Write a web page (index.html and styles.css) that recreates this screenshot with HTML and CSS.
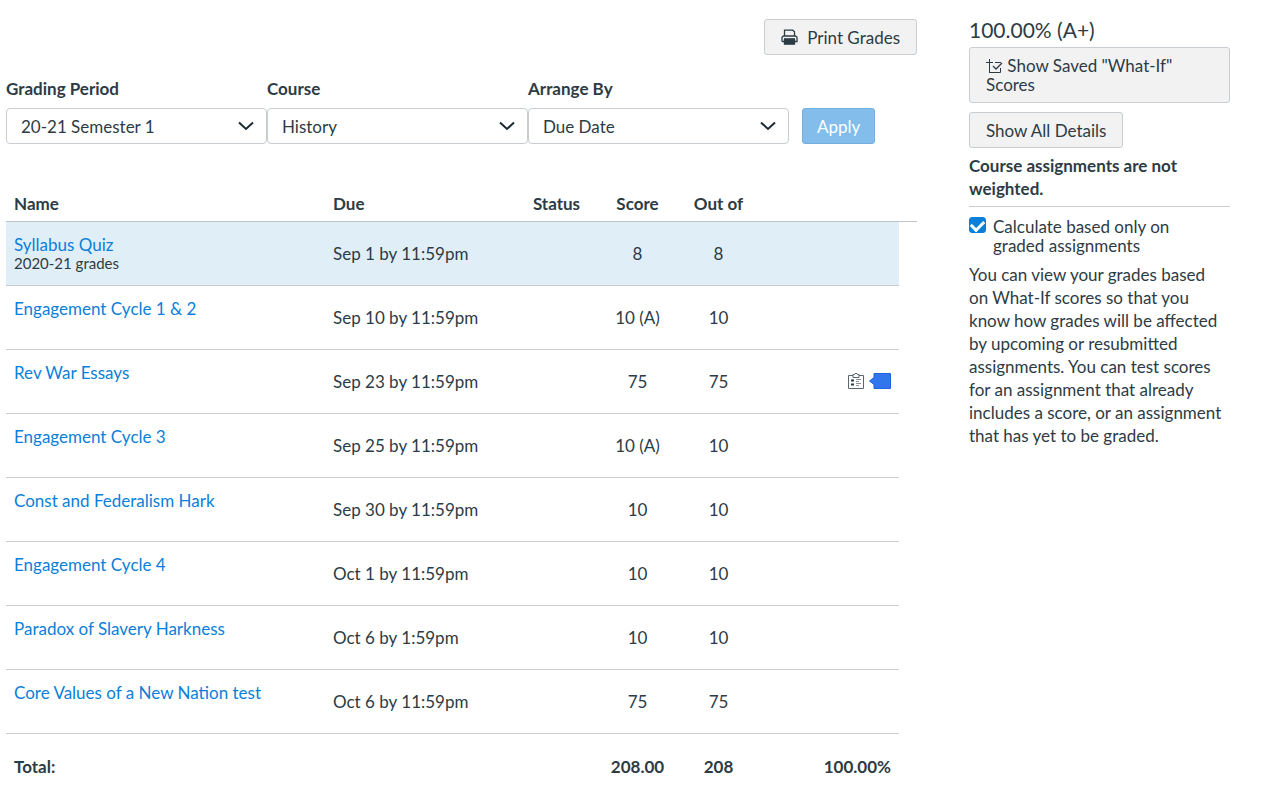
FILE: index.html
```html
<!DOCTYPE html>
<html lang="en">
<head>
    <meta charset="UTF-8">
    <meta name="viewport" content="width=device-width, initial-scale=1.0">
    <title>Grades</title>
    <link rel="stylesheet" href="styles.css">
</head>
<body>

<div class="page">
    <main>
        <div class="toolbar">
            <button type="button" class="btn btn-print">
                <svg width="17" height="16" viewBox="0 0 17 16" fill="none" stroke="#2d3b45" stroke-width="1.3">
                    <path d="M3.5 7V1.2h8.3l1.7 1.6V7M1 12.5V8.2L2.5 7h12L16 8.2v4.3h-2M1 12.5h2M3 9.8h11"/>
                    <path d="M3.5 10.5h10v4.7h-10z" fill="#2d3b45"/>
                </svg>
                Print Grades
            </button>
        </div>

        <form class="filters">
            <div class="form-group">
                <label for="period">Grading Period</label>
                <div class="select">
                    <select id="period" name="period">
                        <option>20-21 Semester 1</option>
                    </select>
                    <svg width="16" height="10" viewBox="0 0 16 10"><path d="M1 1.5l7 6.5 7-6.5"/></svg>
                </div>
            </div>
            <div class="form-group">
                <label for="course">Course</label>
                <div class="select">
                    <select id="course" name="course">
                        <option>History</option>
                    </select>
                    <svg width="16" height="10" viewBox="0 0 16 10"><path d="M1 1.5l7 6.5 7-6.5"/></svg>
                </div>
            </div>
            <div class="form-group">
                <label for="arrange">Arrange By</label>
                <div class="select">
                    <select id="arrange" name="arrange">
                        <option>Due Date</option>
                    </select>
                    <svg width="16" height="10" viewBox="0 0 16 10"><path d="M1 1.5l7 6.5 7-6.5"/></svg>
                </div>
            </div>
            <button type="button" class="btn btn-apply">Apply</button>
        </form>

        <table class="grades">
            <colgroup>
                <col>
                <col class="col-due">
                <col class="col-num">
                <col class="col-num">
                <col class="col-num">
                <col class="col-details">
                <col class="col-end">
            </colgroup>
            <thead>
                <tr>
                    <th class="name">Name</th>
                    <th class="due">Due</th>
                    <th>Status</th>
                    <th>Score</th>
                    <th>Out of</th>
                    <th></th>
                    <th></th>
                </tr>
            </thead>
            <tbody>
                <tr class="active">
                    <td class="name"><a href="#">Syllabus Quiz</a><div class="group">2020-21 grades</div></td>
                    <td class="due">Sep 1 by 11:59pm</td>
                    <td></td>
                    <td>8</td>
                    <td>8</td>
                    <td class="details"></td>
                </tr>
                <tr>
                    <td class="name"><a href="#">Engagement Cycle 1 &amp; 2</a></td>
                    <td class="due">Sep 10 by 11:59pm</td>
                    <td></td>
                    <td>10 (A)</td>
                    <td>10</td>
                    <td class="details"></td>
                </tr>
                <tr>
                    <td class="name"><a href="#">Rev War Essays</a></td>
                    <td class="due">Sep 23 by 11:59pm</td>
                    <td></td>
                    <td>75</td>
                    <td>75</td>
                    <td class="details">
                        <div class="icons">
                            <svg width="16" height="17" viewBox="0 0 16 17" fill="none" stroke="#5b656d">
                                <path d="M5 2.5H.5v13h15v-13H11"/>
                                <path d="M5 4.5v-3h1.5L7 .5h2l.5 1H11v3z"/>
                                <path d="M3 7.500h3M3 11.500h3" stroke="#2d3b45" stroke-width="2"/>
                                <path d="M8 6.500h5M8 8.500h3M8 10.500h5M8 12.500h3" stroke="#8b9399"/>
                            </svg>
                            <svg width="22" height="16" viewBox="0 0 22 16">
                                <path d="M5 .5h16.500v15H5v-4L.5 8 5 4.500z" fill="#3276ee" stroke="#1f63dd"/>
                            </svg>
                        </div>
                    </td>
                </tr>
                <tr>
                    <td class="name"><a href="#">Engagement Cycle 3</a></td>
                    <td class="due">Sep 25 by 11:59pm</td>
                    <td></td>
                    <td>10 (A)</td>
                    <td>10</td>
                    <td class="details"></td>
                </tr>
                <tr>
                    <td class="name"><a href="#">Const and Federalism Hark</a></td>
                    <td class="due">Sep 30 by 11:59pm</td>
                    <td></td>
                    <td>10</td>
                    <td>10</td>
                    <td class="details"></td>
                </tr>
                <tr>
                    <td class="name"><a href="#">Engagement Cycle 4</a></td>
                    <td class="due">Oct 1 by 11:59pm</td>
                    <td></td>
                    <td>10</td>
                    <td>10</td>
                    <td class="details"></td>
                </tr>
                <tr>
                    <td class="name"><a href="#">Paradox of Slavery Harkness</a></td>
                    <td class="due">Oct 6 by 1:59pm</td>
                    <td></td>
                    <td>10</td>
                    <td>10</td>
                    <td class="details"></td>
                </tr>
                <tr>
                    <td class="name"><a href="#">Core Values of a New Nation test</a></td>
                    <td class="due">Oct 6 by 11:59pm</td>
                    <td></td>
                    <td>75</td>
                    <td>75</td>
                    <td class="details"></td>
                </tr>
            </tbody>
            <tfoot>
                <tr>
                    <th class="name">Total:</th>
                    <td></td>
                    <td></td>
                    <td>208.00</td>
                    <td>208</td>
                    <td class="details">100.00%</td>
                </tr>
            </tfoot>
        </table>
    </main>

    <aside>
        <div class="final-grade">100.00% (A+)</div>
        <button type="button" class="btn btn-whatif">
            <svg width="17" height="15" viewBox="0 0 17 15" fill="none" stroke="#2d3b45">
                <path d="M3.500 0v14M0 3.500h7M9 3.500h6M3.500 13.500h11V9"/>
                <path d="M7 7l3 3 6-6" stroke-width="1.300"/>
            </svg>
            Show Saved "What-If" Scores
        </button>
        <button type="button" class="btn">Show All Details</button>
        <h2>Course assignments are not weighted.</h2>
        <div class="check">
            <input type="checkbox" id="only_graded" checked>
            <label for="only_graded">Calculate based only on graded assignments</label>
        </div>
        <p>You can view your grades based on What-If scores so that you know how grades will be affected by upcoming or resubmitted assignments. You can test scores for an assignment that already includes a score, or an assignment that has yet to be graded.</p>
    </aside>
</div>

</body>
</html>
```
FILE: styles.css
```css
* {
    margin: 0;
    padding: 0;
    box-sizing: border-box;
}
body {
    font-family: Lato, "Liberation Sans", sans-serif;
    font-size: 17px;
    line-height: 23px;
    background-color: #fff;
    color: #2d3b45;
}
.page {
    display: grid;
    grid-template-columns: minmax(0, 1fr) 261px;
    gap: 52px;
    padding: 19px 50px 0 6px;
}
a {
    color: #0a7fd9;
    text-decoration: none;
}
.btn {
    height: 36px;
    font: inherit;
    line-height: 19px;
    color: #2d3b45;
    text-align: left;
    background-color: #f2f2f2;
    border: 1px solid #c7cdd1;
    border-radius: 3px;
    padding: 0 16px;
    cursor: pointer;
}
.toolbar {
    display: flex;
    justify-content: flex-end;
}
.btn-print {
    display: flex;
    align-items: center;
    gap: 9px;
}
.filters {
    display: flex;
    align-items: flex-end;
    margin-top: 22px;
}
.form-group {
    flex: 0 1 261px;
}
.form-group label {
    display: block;
    font-weight: 700;
    margin-bottom: 8px;
}
.select {
    display: grid;
    align-items: center;
}
.select select,
.select svg {
    grid-area: 1 / 1;
}
.select select {
    appearance: none;
    width: 100%;
    height: 36px;
    padding: 0 14px;
    font: inherit;
    color: #2d3b45;
    background-color: #fff;
    border: 1px solid #c7cdd1;
    border-radius: 4px;
}
.select svg {
    justify-self: end;
    margin-right: 13px;
    pointer-events: none;
    fill: none;
    stroke: #1c2a33;
    stroke-width: 2;
}
.btn-apply {
    margin-left: 13px;
    padding: 0 14px;
    color: #fff;
    background-color: #82bdec;
    border-color: #76afdd;
}
.grades {
    width: 100%;
    margin-top: 43px;
    table-layout: fixed;
    border-collapse: collapse;
}
.col-due {
    width: 191px;
}
.col-num {
    width: 81px;
}
.col-details {
    width: 140px;
}
.col-end {
    width: 18px;
}
.grades th,
.grades td {
    text-align: center;
    white-space: nowrap;
}
.grades thead th {
    height: 34px;
    border-bottom: 1px solid #bfc4c7;
}
.grades tbody td {
    height: 64px;
    border-bottom: 1px solid #c7cdd1;
}
.grades .name,
.grades .due {
    text-align: left;
    padding-left: 8px;
}
.grades tbody .name {
    vertical-align: top;
    padding-top: 14px;
    line-height: 18px;
}
.grades .group {
    font-size: 15px;
}
.grades .details {
    text-align: right;
    padding-right: 8px;
}
.grades .active td {
    background-color: #e0eff7;
}
.grades tfoot th,
.grades tfoot td {
    height: 66px;
    font-weight: 700;
}
.icons {
    display: flex;
    justify-content: flex-end;
    align-items: center;
    gap: 5px;
}
.final-grade {
    font-size: 21px;
    line-height: 22px;
    margin-bottom: 6px;
}
.btn-whatif {
    width: 100%;
    height: auto;
    padding: 8px 16px;
    margin-bottom: 9px;
}
.btn-whatif svg {
    vertical-align: -2px;
}
aside h2 {
    font-size: 17px;
    line-height: 23px;
    margin-top: 6px;
    padding-bottom: 6px;
    border-bottom: 1px solid #c7cdd1;
}
aside p {
    padding-right: 5px;
}
.check {
    display: flex;
    gap: 7px;
    margin: 10px 40px 8px 0;
    line-height: 19px;
}
.check input {
    appearance: none;
    flex: none;
    display: grid;
    place-items: center;
    width: 17px;
    height: 16px;
    border-radius: 3px;
    border: 1px solid #c7cdd1;
}
.check input:checked {
    background-color: #0a7fd9;
    border-color: #0a7fd9;
}
.check input:checked::before {
    content: "";
    width: 10px;
    height: 6px;
    border-left: 3px solid #fff;
    border-bottom: 3px solid #fff;
    transform: translateY(-1px) rotate(-45deg);
}
```
